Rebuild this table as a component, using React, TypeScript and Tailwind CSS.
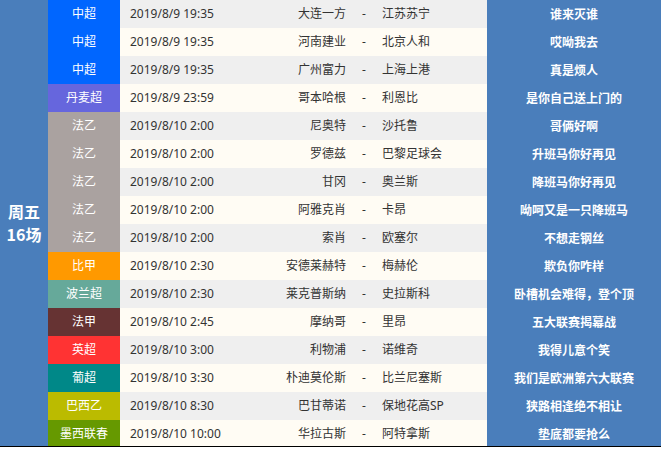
import React from 'react';

type Match = {
  league: string;
  color: string;
  time: string;
  home: string;
  away: string;
  note: string;
};

const matches: Match[] = [
  { league: '中超', color: 'bg-[#0066ff]', time: '2019/8/9 19:35', home: '大连一方', away: '江苏苏宁', note: '谁来灭谁' },
  { league: '中超', color: 'bg-[#0066ff]', time: '2019/8/9 19:35', home: '河南建业', away: '北京人和', note: '哎呦我去' },
  { league: '中超', color: 'bg-[#0066ff]', time: '2019/8/9 19:35', home: '广州富力', away: '上海上港', note: '真是烦人' },
  { league: '丹麦超', color: 'bg-[#6666dd]', time: '2019/8/9 23:59', home: '哥本哈根', away: '利恩比', note: '是你自己送上门的' },
  { league: '法乙', color: 'bg-[#aaa2a0]', time: '2019/8/10 2:00', home: '尼奥特', away: '沙托鲁', note: '哥俩好啊' },
  { league: '法乙', color: 'bg-[#aaa2a0]', time: '2019/8/10 2:00', home: '罗德兹', away: '巴黎足球会', note: '升班马你好再见' },
  { league: '法乙', color: 'bg-[#aaa2a0]', time: '2019/8/10 2:00', home: '甘冈', away: '奥兰斯', note: '降班马你好再见' },
  { league: '法乙', color: 'bg-[#aaa2a0]', time: '2019/8/10 2:00', home: '阿雅克肖', away: '卡昂', note: '呦呵又是一只降班马' },
  { league: '法乙', color: 'bg-[#aaa2a0]', time: '2019/8/10 2:00', home: '索肖', away: '欧塞尔', note: '不想走钢丝' },
  { league: '比甲', color: 'bg-[#ff9900]', time: '2019/8/10 2:30', home: '安德莱赫特', away: '梅赫伦', note: '欺负你咋样' },
  { league: '波兰超', color: 'bg-[#66a99a]', time: '2019/8/10 2:30', home: '莱克普斯纳', away: '史拉斯科', note: '卧槽机会难得，登个顶' },
  { league: '法甲', color: 'bg-[#663333]', time: '2019/8/10 2:45', home: '摩纳哥', away: '里昂', note: '五大联赛揭幕战' },
  { league: '英超', color: 'bg-[#ff3333]', time: '2019/8/10 3:00', home: '利物浦', away: '诺维奇', note: '我得儿意个笑' },
  { league: '葡超', color: 'bg-[#008888]', time: '2019/8/10 3:30', home: '朴迪莫伦斯', away: '比兰尼塞斯', note: '我们是欧洲第六大联赛' },
  { league: '巴西乙', color: 'bg-[#bbbb00]', time: '2019/8/10 8:30', home: '巴甘蒂诺', away: '保地花高SP', note: '狭路相逢绝不相让' },
  { league: '墨西联春', color: 'bg-[#669900]', time: '2019/8/10 10:00', home: '华拉古斯', away: '阿特拿斯', note: '垫底都要抢么' },
];

export default function App() {
  return (
    <div className="w-[661px] h-[449px] bg-white font-['Noto_Sans','Noto_Sans_CJK_SC',sans-serif] text-[12px] overflow-hidden">
      <div className="flex h-[447px] overflow-hidden border-b border-black">
        <div className="w-[48px] shrink-0 bg-[#4a7ebb] flex flex-col items-center justify-center text-white font-bold text-[16px] leading-[23px] font-['Noto_Sans_CJK_SC',serif]">
          <span className="block">周五</span>
          <span className="block">16场</span>
        </div>
        <div className="flex flex-col">
          {matches.map((m, i) => (
            <div
              key={i}
              className={`grid grid-cols-[72px_130px_96px_36px_105px_174px] h-[28px] shrink-0 items-stretch ${
                i % 2 === 0 ? 'bg-[#efefef]' : 'bg-[#fffcf4]'
              }`}
            >
              <div className={`${m.color} text-white flex items-center justify-center`}>{m.league}</div>
              <div className="flex items-center pl-[10px] text-[#333]">{m.time}</div>
              <div className="flex items-center justify-end text-[#333]">{m.home}</div>
              <div className="flex items-center justify-center text-[#333]">-</div>
              <div className="flex items-center text-[#333]">{m.away}</div>
              <div className="bg-[#4a7ebb] text-white font-bold flex items-center justify-center font-['Noto_Sans_CJK_SC',sans-serif]">
                {m.note}
              </div>
            </div>
          ))}
        </div>
      </div>
    </div>
  );
}
